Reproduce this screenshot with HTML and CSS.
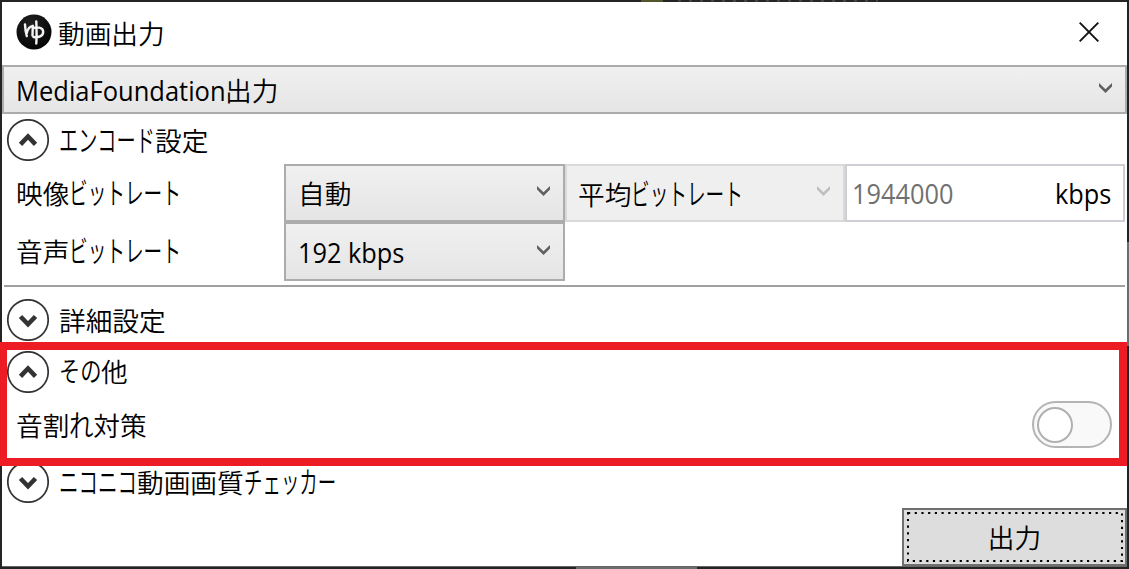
FILE: index.html
```html
<!DOCTYPE html>
<html lang="ja">
<head>
<meta charset="utf-8">
<title>動画出力</title>
<link rel="stylesheet" href="styles.css">
</head>
<body>
<div class="desktop">
  <main class="window">
    <header class="titlebar">
      <svg class="logo" viewBox="0 0 36 36" aria-hidden="true">
        <defs><radialGradient id="g" cx=".4" cy=".3" r=".7"><stop offset="0" stop-color="#222"/><stop offset="1" stop-color="#050505"/></radialGradient></defs>
        <circle cx="18" cy="18" r="17.5" fill="url(#g)"/>
        <path d="M9 10.500c.2 4 .6 8 1.800 11.500M10.800 19c.7-3.500 2.700-6.500 6-7.200L16.500 21.500M20.300 7.500c.3 7 .5 14 0 22M17 14.500c3.500-2 10-1.500 10.200 3.200.1 4.300-5 6.300-9.700 5.300" fill="none" stroke="#f4f4f4" stroke-width="2.400" stroke-linecap="round" stroke-linejoin="round"/>
      </svg>
      <span class="title">動画出力</span>
      <svg class="close" viewBox="0 0 20 20" aria-label="閉じる"><path d="M.7.7 19.300 19.300M19.300.7.7 19.300" stroke="#111" stroke-width="1.900"/></svg>
    </header>

    <div class="combo format"><span><span class="latin media">MediaFoundation</span>出力</span><svg class="chev" viewBox="0 0 13 10"><path d="M0 0 6.500 6.300 13 0V3.500L6.500 10 0 3.500Z"/></svg></div>

    <div class="expander first"><svg class="round" viewBox="0 0 42 42"><circle cx="21" cy="21" r="20.200"/><path d="M13.500 25.300 21 17.500 28.500 25.300"/></svg><span><span class="kana k-enc">エンコード</span>設定</span></div>

    <section class="settings">
      <span class="label">映像<span class="kana k-bit">ビットレート</span></span>
      <div class="combo"><span>自動</span><svg class="chev" viewBox="0 0 13 10"><path d="M0 0 6.500 6.300 13 0V3.500L6.500 10 0 3.500Z"/></svg></div>
      <div class="combo disabled"><span>平均<span class="kana k-bit">ビットレート</span></span><svg class="chev" viewBox="0 0 13 10"><path d="M0 0 6.500 6.300 13 0V3.500L6.500 10 0 3.500Z"/></svg></div>
      <div class="field"><span class="latin value">1944000</span><span class="latin unit">kbps</span></div>
      <span class="label">音声<span class="kana k-bit">ビットレート</span></span>
      <div class="combo"><span class="latin rate">192 kbps</span><svg class="chev" viewBox="0 0 13 10"><path d="M0 0 6.500 6.300 13 0V3.500L6.500 10 0 3.500Z"/></svg></div>
    </section>

    <div class="expander detail"><svg class="round" viewBox="0 0 42 42"><circle cx="21" cy="21" r="20.200"/><path d="M13.500 17.500 21 25.300 28.500 17.500"/></svg><span>詳細設定</span></div>

    <section class="other">
      <div class="expander"><svg class="round" viewBox="0 0 42 42"><circle cx="21" cy="21" r="20.200"/><path d="M13.500 25.300 21 17.500 28.500 25.300"/></svg><span><span class="kana k-sono">その</span>他</span></div>
      <div class="option"><span>音割<span class="kana k-re">れ</span>対策</span><span class="toggle"><i class="knob"></i></span></div>
      <div class="highlight"></div>
    </section>

    <div class="expander checker"><svg class="round" viewBox="0 0 42 42"><circle cx="21" cy="21" r="20.200"/><path d="M13.500 17.500 21 25.300 28.500 17.500"/></svg><span><span class="kana k-nico">ニコニコ</span>動画画質<span class="kana k-check">チェッカー</span></span></div>

    <footer class="footer"><button class="submit"><svg class="focus" viewBox="0 0 224 58"><rect x="6" y="5" width="214" height="48"/></svg>出力</button></footer>
  </main>
</div>
</body>
</html>
```
FILE: styles.css
```css
* { box-sizing: border-box; }
body {
  margin: 0;
  font: 350 26.67px/36px "Noto Sans CJK JP", sans-serif;
  color: #000;
}
.desktop {
  width: 1129px;
  height: 569px;
  padding: 2px;
  overflow: hidden;
  background:
    linear-gradient(#6d6d6d, #6d6d6d) 576px 567px / 121px 2px no-repeat,
    linear-gradient(#6d6d6d, #6d6d6d) 1127px 242px / 2px 104px no-repeat,
    linear-gradient(#55552c, #55552c) 641px 0 / 22px 2px no-repeat,
    repeating-linear-gradient(90deg, #444 0 3px, #262626 3px 11px) 678px 0 / 200px 2px no-repeat,
    #242426;
}
.window {
  position: relative;
  width: 1125px;
  height: 565px;
  background: #fff;
  border-bottom: 1px solid #666;
  display: flex;
  flex-direction: column;
}
.latin { display: inline-block; font-family: "Open Sans", sans-serif; font-weight: 400; transform: scaleX(.95); transform-origin: 0 50%; }
.media { width: 209px; transform: scaleX(.957); }
.unit { transform-origin: 100% 50%; }
.rate { padding-top: 2px; }
.kana { display: inline-block; white-space: nowrap; transform-origin: 0 50%; font-size: 29.5px; line-height: 34px; }
.k-enc { width: 96px; transform: scaleX(.65); }
.k-bit { width: 111px; transform: scaleX(.632); }
.k-sono { width: 42px; font-size: 28px; transform: scaleX(.76); }
.k-re { width: 24px; transform: scaleX(.83); }
.k-nico { width: 78px; transform: scaleX(.66); }
.k-check { width: 91px; transform: scaleX(.625); }

.titlebar { display: flex; align-items: center; height: 63px; padding: 0 28px 3px 14px; }
.logo { width: 36px; height: 36px; }
.title { margin: 1px auto 0 6px; }
.close { width: 20px; height: 20px; }

.combo {
  display: flex;
  align-items: center;
  justify-content: space-between;
  border: 2px solid #acacac;
  background: linear-gradient(#f0f0f0, #e5e5e5);
  padding: 0 13px 0 12px;
}
.combo.disabled { background: #efefef; border-color: #d9d9d9; padding-left: 11px; }
.chev { width: 13px; height: 10px; margin-bottom: 4px; fill: #606060; }
.disabled .chev { fill: #bfbfbf; }
.combo.format { height: 49px; padding: 1px 13px 0 12px; }

.expander { display: flex; align-items: center; gap: 10px; height: 42px; padding-left: 5px; }
.expander > span, .option > span:first-child { margin-top: -2px; }
.detail > span { margin-top: 0; }
.round { width: 42px; height: 42px; fill: none; stroke: #333; }
.round circle { stroke-width: 1.7px; fill: #fff; }
.round path { stroke-width: 4.6px; }
.first { margin-top: 5px; }

.settings {
  display: grid;
  grid-template-columns: 282px 281px 280px 280px;
  grid-template-rows: 58px 59px;
  height: 126px;
  margin: 3px 2px 0 0;
  background: linear-gradient(#a0a0a0, #a0a0a0) 2px 121px / 1121px 2px no-repeat;
}
.label { padding: 0 0 2px 14px; align-self: center; }
.field {
  display: flex;
  align-items: center;
  justify-content: space-between;
  border: 2px solid #cfced4;
  padding: 2px 12px 0 5px;
}
.value { color: #707070; }
.detail { margin-top: 9px; }
.other { position: relative; margin-top: 10px; height: 110px; }
.highlight { position: absolute; left: -3px; top: -9px; width: 1128px; height: 124px; border: 8px solid #ed1c24; }
.option { display: flex; align-items: center; justify-content: space-between; height: 64px; padding: 0 15px 0 14px; }
.toggle { display: flex; align-items: center; width: 80px; height: 47px; margin-bottom: 1px; padding-left: 3px; border: 2px solid #b4b4b4; border-radius: 24px; background: #f9f9f9; }
.knob { width: 36px; height: 36px; border: 2px solid #b0b0b0; border-radius: 50%; background: #fff; }
.footer { display: flex; justify-content: flex-end; margin-top: 5px; }
.submit { position: relative; width: 225px; height: 58px; padding: 0; border: 2px solid #707070; background: #ddd; font: inherit; color: #000; }
.focus { position: absolute; left: -2px; top: -2px; width: 224px; height: 58px; fill: none; stroke: #000; stroke-width: 2px; stroke-dasharray: 2.200 4.500; }
```
